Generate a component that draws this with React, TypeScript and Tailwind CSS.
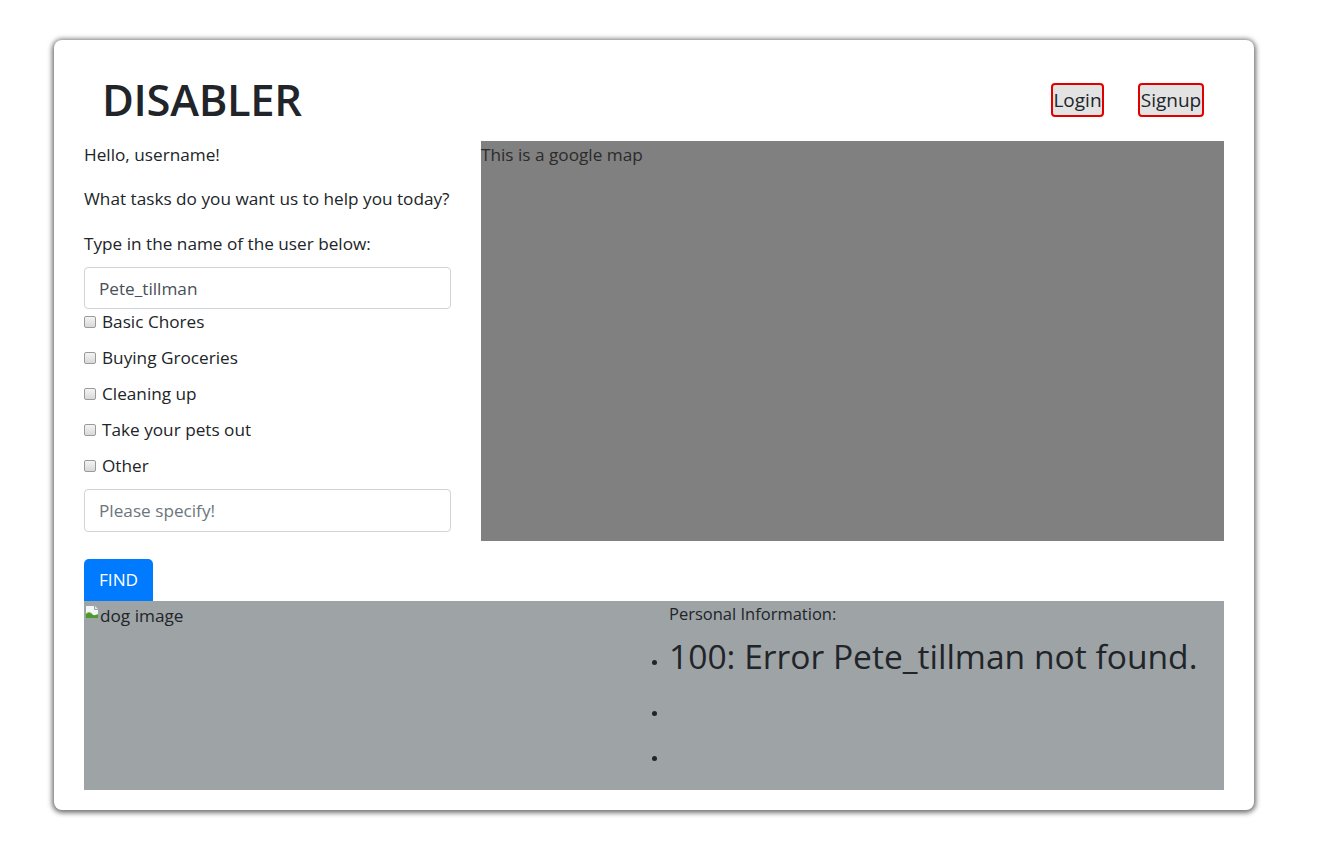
import React from 'react';

const TASKS = ['Basic Chores', 'Buying Groceries', 'Cleaning up', 'Take your pets out', 'Other'];

function BrokenImage() {
  return (
    <svg width="16" height="16" viewBox="0 0 16 16" className="shrink-0">
      <path d="M1.5 1.5h9l4 4v9h-13z" fill="#f4f6f8" stroke="#9aa3ad" />
      <path d="M10.5 1.5v4h4" fill="#dfe4ea" stroke="#9aa3ad" />
      <path d="M2 14V10c2-2 4-2 6 0s4 1 6 0v4z" fill="#4c9a2a" />
      <path d="M2 10c2-2 4-2 6 0" fill="none" stroke="#7bc043" />
    </svg>
  );
}

function Bullet() {
  return <span className="w-[5px] h-[5px] rounded-full bg-[#212529] shrink-0" />;
}

export default function App() {
  return (
    <div className="min-h-[867px] w-[1328px] bg-white pt-[40px] pl-[54px] font-['Open_Sans',sans-serif] text-[#212529]">
      <div className="w-[1200px] h-[770px] rounded-[8px] bg-white shadow-[0_1px_5px_2px_rgba(0,0,0,0.55)] px-[30px]">
        {/* Header */}
        <div className="flex items-center h-[101px] pt-[19px]">
          <h1 className="ml-[18px] text-[43.5px] font-semibold tracking-[-0.3px] text-[#212529]">DISABLER</h1>
          <div className="ml-auto flex gap-[34px] mr-[20px]">
            <button className="h-[34px] px-0 w-[53px] bg-[#e3e3e3] border-2 border-[#e00000] rounded-[4px] text-[19px] leading-none">Login</button>
            <button className="h-[34px] px-0 w-[66px] bg-[#e3e3e3] border-2 border-[#e00000] rounded-[4px] text-[19px] leading-none">Signup</button>
          </div>
        </div>

        <div className="flex gap-[30px]">
          {/* Left column */}
          <div className="w-[367px] text-[17.2px] whitespace-nowrap">
            <p className="leading-[28px] mb-[16px]">Hello, username!</p>
            <p className="leading-[28px] mb-[17px]">What tasks do you want us to help you today?</p>
            <p className="leading-[28px] mb-[9px]">Type in the name of the user below:</p>
            <input
              readOnly
              value="Pete_tillman"
              className="w-full h-[42px] border border-[#ced4da] rounded-[4px] px-[14px] text-[17.2px] text-[#495057] outline-none"
            />
            <div className="flex flex-col gap-[12px] mt-[1px]">
              {TASKS.map((t) => (
                <label key={t} className="flex items-center h-[24px]">
                  <span className="w-[12px] h-[12px] border border-[#9a9a9a] rounded-[2px] bg-gradient-to-b from-[#f4f4f4] to-[#d8d8d8] mr-[6px]" />
                  <span>{t}</span>
                </label>
              ))}
            </div>
            <input
              readOnly
              placeholder="Please specify!"
              className="mt-[11px] w-full h-[43px] border border-[#ced4da] rounded-[4px] px-[14px] text-[17.2px] placeholder:text-[#6c757d] outline-none"
            />
            <button className="block mt-[27px] h-[42px] px-[15px] bg-[#007bff] text-white text-[17.2px] rounded-t-[5px] rounded-b-none">FIND</button>
          </div>

          {/* Map */}
          <div className="w-[743px] h-[400px] bg-[#808080] text-[#2b2b2b] text-[17.2px] leading-[28px]">
            This is a google map
          </div>
        </div>

        {/* Results */}
        <div className="flex h-[189px] bg-[#9ea3a6]">
          <div className="w-[570px] flex items-start pt-[3px]">
            <BrokenImage />
            <span className="text-[17.2px] leading-[26px] -mt-[1px] text-[#212529]">dog image</span>
          </div>
          <div className="flex-1 pl-[15px]">
            <div className="text-[16.5px] leading-[24px] mt-[1px]">Personal Information:</div>
            <ul className="mt-[8px]">
              <li className="flex items-center h-[45px] mb-[12px] -ml-[17px]">
                <span className="mr-[12px] mt-[12px] flex"><Bullet /></span>
                <span className="text-[33.6px] leading-[45px] whitespace-nowrap">100: Error Pete_tillman not found.</span>
              </li>
              <li className="flex items-center h-[45px] -ml-[17px]">
                <Bullet />
              </li>
              <li className="flex items-center h-[45px] -ml-[17px]">
                <Bullet />
              </li>
            </ul>
          </div>
        </div>
      </div>
    </div>
  );
}
